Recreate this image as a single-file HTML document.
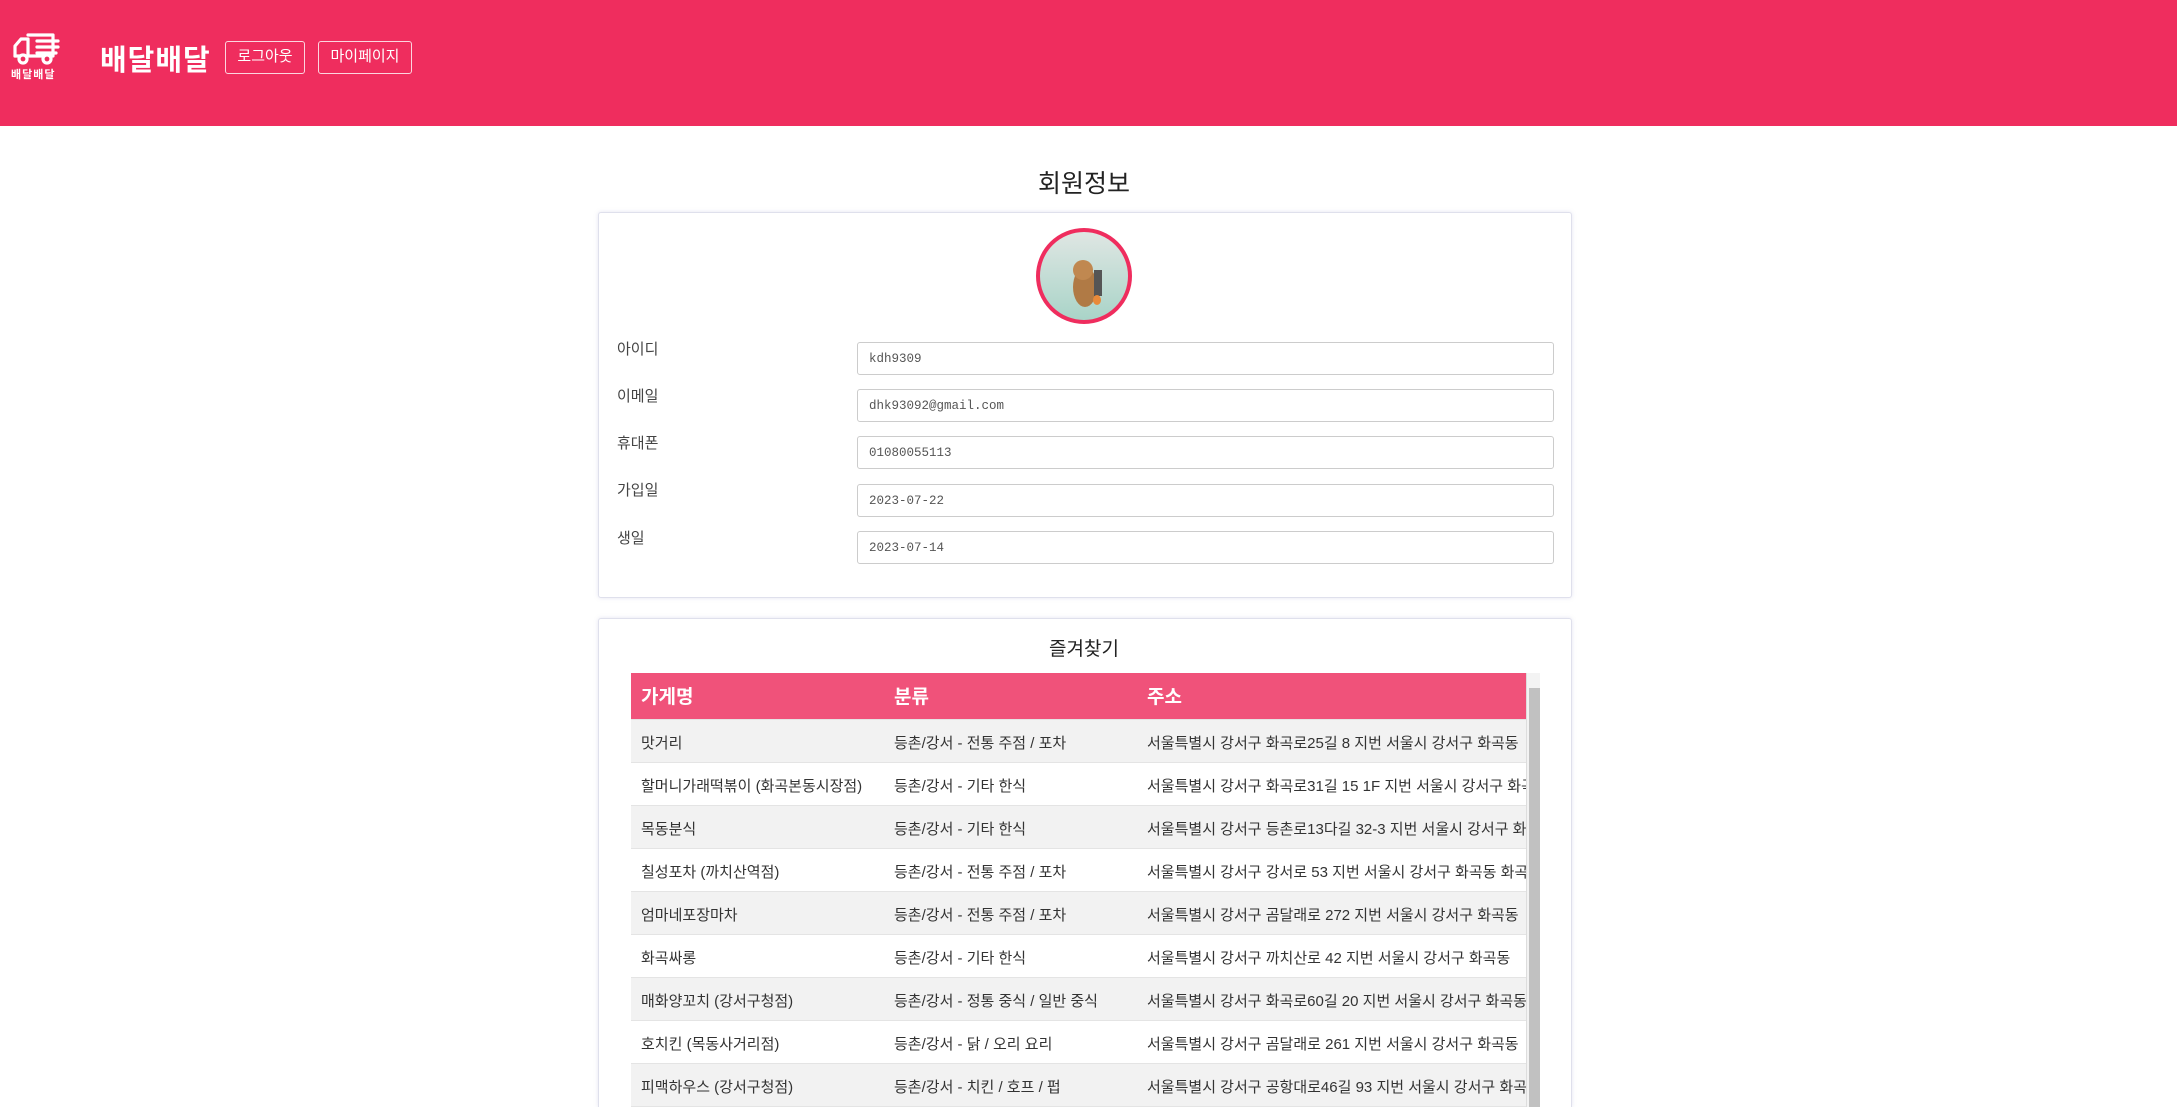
<!DOCTYPE html>
<html style="height:1107px;overflow:hidden"><head><meta charset="utf-8">
<style>
*{box-sizing:border-box;margin:0;padding:0}
body{width:2177px;height:1107px;overflow:hidden;background:#fff;font-family:"Liberation Sans","Noto Sans CJK KR",sans-serif;color:#333;position:relative}
.hdr{position:absolute;left:0;top:0;width:2177px;height:126px;background:#ef2d5e}
.logo{position:absolute;left:11px;top:32px;width:50px;height:34px}
.logotxt{position:absolute;left:11px;top:66px;font-size:11px;font-weight:bold;color:#fff;letter-spacing:1px}
.title{position:absolute;left:100px;top:37px;font-size:29px;font-weight:bold;color:#fff;letter-spacing:1px}
.btn{position:absolute;top:41px;height:33px;border:1.5px solid rgba(255,255,255,.8);border-radius:3px;color:#fff;font-size:15px;line-height:30px;text-align:center}
h2{position:absolute;left:0;width:2168px;text-align:center;font-weight:normal;color:#222}
.card{position:absolute;left:598px;width:974px;background:#fff;border:1px solid #dfe0ec;box-shadow:0 0 4px rgba(150,150,200,.25);border-radius:3px}
.av{position:absolute;left:1036px;top:228px;width:96px;height:96px;border-radius:50%;border:4px solid #ef2d5e;background:linear-gradient(#dfe6e3,#a9d4c8);overflow:hidden}
.lbl{position:absolute;left:617px;font-size:15px;color:#444}
.inp{position:absolute;left:857px;width:697px;height:33px;border:1px solid #ccc;border-radius:3px;font-family:"Liberation Mono",monospace;font-size:12.5px;color:#555;padding-left:11px;line-height:33px}
.tbl{position:absolute;left:631px;top:673px;width:895px;height:434px;overflow:hidden}
table{border-collapse:collapse;width:895px;table-layout:fixed}
th{background:#f0527a;color:#fff;font-size:19px;text-align:left;height:46px;padding-left:10px;font-weight:bold}
td{font-size:15px;height:43px;padding-left:10px;padding-top:4px;white-space:nowrap;overflow:hidden;color:#333;border-top:1px solid #e4e4e4}
tr:nth-child(even) td{background:#f2f2f2}
.sb{position:absolute;left:1526px;top:673px;width:14px;height:434px;background:#f3f3f3;border-left:1px solid #ddd}
.sb div{position:absolute;left:2px;top:15px;width:11px;height:419px;background:#c1c1c1}
</style></head><body>
<div class="hdr">
<svg class="logo" viewBox="0 0 50 34"><g fill="none" stroke="#fff" stroke-width="3.2" stroke-linejoin="round" stroke-linecap="round"><path d="M4 24 L4 14 L10 7 L17 7 L17 24"/><path d="M17 3 L42 3 L42 24 L4 24"/><circle cx="12" cy="27" r="4" fill="#ef2d5e"/><circle cx="36" cy="27" r="4" fill="#ef2d5e"/><path d="M26 9 H47 M26 15 H47 M26 21 H45"/></g></svg>
<div class="logotxt">배달배달</div>
<div class="title">배달배달</div>
<div class="btn" style="left:225px;width:80px">로그아웃</div>
<div class="btn" style="left:318px;width:94px">마이페이지</div>
</div>
<h2 style="top:164px;font-size:25px">회원정보</h2>
<div class="card" style="top:212px;height:386px"></div>
<div class="av"><svg width="96" height="96" viewBox="0 0 96 96"><ellipse cx="45" cy="55" rx="12" ry="20" fill="#b07a45"/><circle cx="43" cy="38" r="10" fill="#c08850"/><rect x="54" y="38" width="8" height="26" fill="#555"/><ellipse cx="57" cy="68" rx="4" ry="5" fill="#e88a3a"/></svg></div>
<div class="lbl" style="top:338px">아이디</div><div class="inp" style="top:342px">kdh9309</div>
<div class="lbl" style="top:385px">이메일</div><div class="inp" style="top:389px">dhk93092@gmail.com</div>
<div class="lbl" style="top:432px">휴대폰</div><div class="inp" style="top:436px">01080055113</div>
<div class="lbl" style="top:479px">가입일</div><div class="inp" style="top:484px">2023-07-22</div>
<div class="lbl" style="top:527px">생일</div><div class="inp" style="top:531px">2023-07-14</div>
<div class="card" style="top:618px;height:489px;border-bottom:none;border-radius:3px 3px 0 0"></div>
<h2 style="top:634px;font-size:19px">즐겨찾기</h2>
<div class="tbl"><table>
<colgroup><col style="width:253px"><col style="width:253px"><col></colgroup>
<tr><th>가게명</th><th>분류</th><th>주소</th></tr>
<tr><td>맛거리</td><td>등촌/강서 - 전통 주점 / 포차</td><td>서울특별시 강서구 화곡로25길 8 지번 서울시 강서구 화곡동</td></tr>
<tr><td>할머니가래떡볶이 (화곡본동시장점)</td><td>등촌/강서 - 기타 한식</td><td>서울특별시 강서구 화곡로31길 15 1F 지번 서울시 강서구 화곡동</td></tr>
<tr><td>목동분식</td><td>등촌/강서 - 기타 한식</td><td>서울특별시 강서구 등촌로13다길 32-3 지번 서울시 강서구 화곡동</td></tr>
<tr><td>칠성포차 (까치산역점)</td><td>등촌/강서 - 전통 주점 / 포차</td><td>서울특별시 강서구 강서로 53 지번 서울시 강서구 화곡동 화곡</td></tr>
<tr><td>엄마네포장마차</td><td>등촌/강서 - 전통 주점 / 포차</td><td>서울특별시 강서구 곰달래로 272 지번 서울시 강서구 화곡동</td></tr>
<tr><td>화곡싸롱</td><td>등촌/강서 - 기타 한식</td><td>서울특별시 강서구 까치산로 42 지번 서울시 강서구 화곡동</td></tr>
<tr><td>매화양꼬치 (강서구청점)</td><td>등촌/강서 - 정통 중식 / 일반 중식</td><td>서울특별시 강서구 화곡로60길 20 지번 서울시 강서구 화곡동</td></tr>
<tr><td>호치킨 (목동사거리점)</td><td>등촌/강서 - 닭 / 오리 요리</td><td>서울특별시 강서구 곰달래로 261 지번 서울시 강서구 화곡동</td></tr>
<tr><td>피맥하우스 (강서구청점)</td><td>등촌/강서 - 치킨 / 호프 / 펍</td><td>서울특별시 강서구 공항대로46길 93 지번 서울시 강서구 화곡동</td></tr>
<tr><td>&nbsp;</td><td></td><td></td></tr>
</table></div>
<div class="sb"><div></div></div>
</body></html>
